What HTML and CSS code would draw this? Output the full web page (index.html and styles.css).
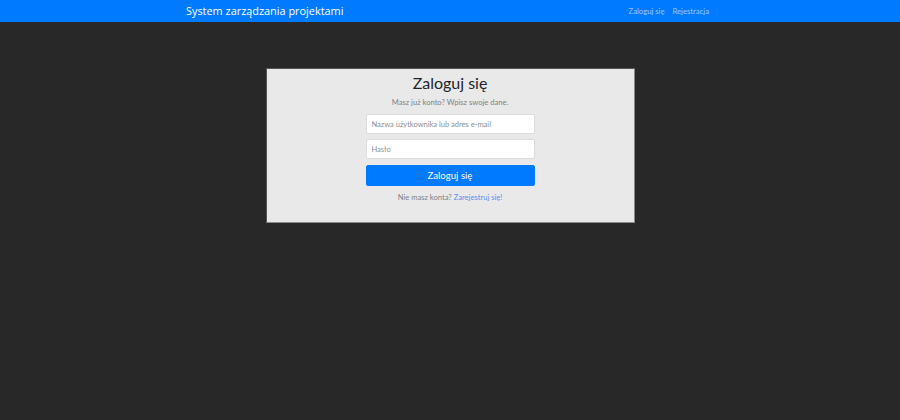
FILE: index.html
```html
<!DOCTYPE html>
<html lang="pl">
<head>
<meta charset="utf-8">
<title>Logowanie</title>
<link rel="stylesheet" href="styles.css">
</head>
<body>
<nav class="navbar">
  <div class="nav-inner">
    <a class="brand" href="#">System zarządzania projektami</a>
    <div class="nav-links">
      <a href="#">Zaloguj się</a>
      <a href="#">Rejestracja</a>
    </div>
  </div>
</nav>
<main class="main">
  <div class="card">
    <h1 class="title">Zaloguj się</h1>
    <p class="subtitle">Masz już konto? Wpisz swoje dane.</p>
    <form class="form">
      <input class="input" type="text" placeholder="Nazwa użytkownika lub adres e-mail">
      <input class="input" type="password" placeholder="Hasło">
      <button class="btn" type="button">Zaloguj się</button>
    </form>
    <p class="footer-text">Nie masz konta? <a href="#">Zarejestruj się!</a></p>
  </div>
</main>
</body>
</html>
```
FILE: styles.css
```css
* { box-sizing: border-box; }
html, body { margin: 0; padding: 0; }
body {
  background: #282828;
  font-family: "Lato", "Open Sans", sans-serif;
  height: 420px;
}
.navbar {
  background: #007bff;
  height: 22px;
}
.nav-inner {
  width: 540px;
  margin: 0 auto;
  height: 22px;
  display: flex;
  align-items: center;
  justify-content: space-between;
  padding: 0 6px 1px;
}
.brand {
  color: #fff;
  text-decoration: none;
  font-family: "Open Sans", sans-serif;
  font-size: 10.9px;
}
.nav-links {
  display: flex;
  gap: 8px;
  padding-right: 5px;
}
.nav-links a {
  color: rgba(255, 255, 255, 0.6);
  text-decoration: none;
  font-size: 7.7px;
}
.main {
  display: flex;
  justify-content: center;
  padding-top: 46px;
}
.card {
  width: 369px;
  height: 155px;
  background: #e9e9e9;
  border: 1px solid #8a8a8a;
  border-top-color: #555;
  border-left-color: #555;
  display: flex;
  flex-direction: column;
  align-items: center;
  padding-top: 3px;
}
.title {
  margin: 0;
  font-weight: 400;
  font-size: 16px;
  line-height: 22px;
  color: #212529;
}
.subtitle {
  margin: 3px 0 0;
  font-size: 7.6px;
  line-height: 10px;
  color: #7a8288;
}
.form {
  width: 169px;
  display: flex;
  flex-direction: column;
  gap: 5px;
  margin-top: 7px;
}
.input {
  height: 20px;
  border: 1px solid #dcdcdc;
  border-radius: 2px;
  background: #fff;
  font-family: inherit;
  font-size: 7.5px;
  padding: 0 5px;
  margin: 0;
  color: #495057;
}
.input::placeholder { color: #8a9197; }
.btn {
  height: 21px;
  margin-top: 1px;
  border: 1px solid #007bff;
  border-radius: 2px;
  background: #007bff;
  color: #fff;
  font-family: inherit;
  font-size: 9.6px;
  padding: 0;
}
.footer-text {
  margin: 6px 0 0;
  font-size: 7.6px;
  line-height: 10px;
  color: #7a8288;
}
.footer-text a {
  color: #5a8df0;
  text-decoration: none;
}
```
